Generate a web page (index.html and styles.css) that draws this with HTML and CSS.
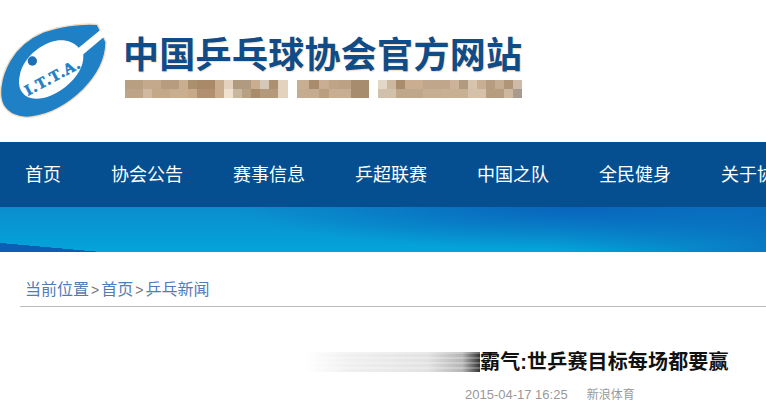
FILE: index.html
```html
<!DOCTYPE html>
<html lang="zh-CN">
<head>
    <meta charset="UTF-8">
    <title>中国乒乓球协会官方网站</title>
    <link rel="stylesheet" href="styles.css">
</head>
<body>
    <header class="header">
        <svg class="logo" width="110" height="102" viewBox="0 0 330 306">
            <path d="M30 130C55 88 90 62 130 45C175 28 240 18 292 22L318 75C318 125 292 175 250 218C205 262 150 292 95 300C55 305 25 290 10 265C-4 240 -2 185 30 130Z" fill="#1f80c6" stroke="#f3dcc0" stroke-width="4"/>
            <path d="M60 172C70 125 120 78 175 70C200 68 222 76 236 92L300 40L316 56L250 112C252 150 232 180 196 210C165 235 125 250 95 244C65 238 50 210 60 172Z" fill="#fff"/>
            <circle cx="97" cy="132" r="14" fill="#1f6fb5"/>
            <text class="logo-text" x="84" y="236" transform="rotate(-28 84 236)">I.T.T.A.</text>
        </svg>
        <div class="brand">
            <h1 class="brand-title">中国乒乓球协会官方网站</h1>
            <div class="brand-sub">
                <span class="mosaic mosaic-a"></span>
                <span class="mosaic mosaic-b"></span>
                <span class="mosaic mosaic-c"></span>
            </div>
        </div>
    </header>

    <nav class="nav">
        <a href="#">首页</a>
        <a href="#">协会公告</a>
        <a href="#">赛事信息</a>
        <a href="#">乒超联赛</a>
        <a href="#">中国之队</a>
        <a href="#">全民健身</a>
        <a href="#">关于协会</a>
    </nav>

    <div class="banner"></div>

    <div class="crumbs">
        <a href="#">当前位置</a><span class="sep">&gt;</span><a href="#">首页</a><span class="sep">&gt;</span><a href="#">乒乓新闻</a>
    </div>

    <main class="article">
        <div class="article-title">
            <span class="smear"></span>
            <h2>霸气:世乒赛目标每场都要赢</h2>
        </div>
        <div class="article-meta">
            <span class="meta-date">2015-04-17 16:25</span>
            <span>新浪体育</span>
        </div>
    </main>
</body>
</html>
```

FILE: styles.css
```css
* {
    box-sizing: border-box;
    margin: 0;
    padding: 0;
}

html, body {
    overflow: hidden;
}

body {
    width: 766px;
    height: 413px;
    font-family: "Liberation Sans", "Noto Sans CJK SC", sans-serif;
    background-color: #fff;
}

a {
    color: inherit;
    text-decoration: none;
}

.header {
    height: 142px;
    display: flex;
    align-items: flex-start;
    padding-top: 17px;
}

.logo {
    flex: none;
}

.logo-text {
    font-family: "Liberation Serif", serif;
    font-size: 46px;
    font-weight: bold;
    fill: #1f80c6;
    stroke: #1f80c6;
    stroke-width: 2px;
    letter-spacing: 4px;
}

.brand {
    margin-left: 13px;
    padding-top: 16px;
}

.brand-title {
    font-size: 36px;
    line-height: 46px;
    font-weight: bold;
    letter-spacing: 0.3px;
    white-space: nowrap;
    color: #0f4c88;
    text-shadow: 1px 1px 1px #f0dcc0;
}

.brand-sub {
    display: flex;
    gap: 9px;
    height: 18px;
    margin-top: 1px;
    margin-left: 2px;
}

.mosaic {
    display: block;
    height: 100%;
    background-repeat: no-repeat;
    background-size: 100% 50%;
    background-position: 0 0, 0 100%;
    filter: blur(0.5px);
}

.mosaic-a {
    width: 163px;
    background-image:
        linear-gradient(90deg, #b89f82 0 18px, #c4a98c 18px 36px, #b89c7f 36px 54px, #c9ae90 54px 63px, #ab9070 63px 72px, #a98a68 72px 90px, #c9ad8e 90px 99px, #e4d2bf 99px 108px, #b09a80 108px 126px, #c9ad8f 126px 135px, #d5c8b8 135px 144px, #ad9070 144px 153px, #e3d2bd 153px),
        linear-gradient(90deg, #bda489 0 18px, #d0b9a0 18px 27px, #c4a88a 27px 45px, #c9ae90 45px 63px, #c9aa88 63px 72px, #b09070 72px 90px, #c9ad8e 90px 99px, #efe0d0 99px 108px, #c9b8a0 108px 117px, #b8a084 117px 126px, #a98c6c 126px 135px, #b39a7a 135px 153px, #e3d2bd 153px);
}

.mosaic-b {
    width: 72px;
    background-image:
        linear-gradient(90deg, #c8ae92 0 12px, #a98c6c 12px 22px, #c8ae92 22px 32px, #bfa586 32px 42px, #bca184 42px 54px, #a88c6e 54px),
        linear-gradient(90deg, #c5ab8f 0 22px, #b99e80 22px 32px, #c8ae92 32px 54px, #a88c6e 54px);
}

.mosaic-c {
    width: 144px;
    background-image:
        linear-gradient(90deg, #e3d8c8 0 9px, #cdb79e 9px 18px, #a98c6c 18px 27px, #c9ae92 27px 45px, #c0a78b 45px 72px, #cdb398 72px 81px, #b09a80 81px 90px, #d8c3ac 90px 99px, #c8ae92 99px 108px, #b79d80 108px 117px, #c4ad92 117px 126px, #b09578 126px 135px, #cdbba8 135px),
        linear-gradient(90deg, #d0c0ac 0 18px, #bfa78c 18px 45px, #c6ae92 45px 63px, #c8b094 63px 90px, #d5c0aa 90px 108px, #b79d80 108px 126px, #cdb79e 126px 135px, #a89a8c 135px);
}

.nav {
    height: 65px;
    display: flex;
    align-items: center;
    gap: 50px;
    padding: 0 0 4px 25px;
    background-color: #054f90;
    color: #fff;
    font-size: 18px;
    white-space: nowrap;
}

.nav a {
    flex: none;
}

.banner {
    height: 45px;
    background:
        linear-gradient(to top right, #0a5fb4 50%, transparent 51%) no-repeat 0 100% / 100px 9px,
        radial-gradient(ellipse 330px 42px at 570px 0, rgba(8, 98, 186, 0.95), transparent),
        linear-gradient(90deg, transparent 72%, rgba(10, 104, 186, 0.7)),
        linear-gradient(180deg, #0b8ccd, #03a5da);
}

.crumbs {
    margin-left: 20px;
    height: 55px;
    padding: 27px 0 0 5px;
    font-size: 16px;
    line-height: 22px;
    color: #4f7cb8;
    border-bottom: 1px solid #bbb;
}

.sep {
    margin: 0 2px;
    color: #777;
    font-size: 14px;
}

.article-title {
    display: flex;
    align-items: center;
    height: 24px;
    margin-top: 43px;
    padding-left: 305px;
}

.article-title h2 {
    font-size: 20px;
    font-weight: bold;
    line-height: 24px;
    letter-spacing: 0.15px;
    color: #111;
    white-space: nowrap;
}

.smear {
    display: block;
    width: 175px;
    height: 20px;
    background:
        repeating-linear-gradient(180deg, rgba(255, 255, 255, 0.25) 0 2px, transparent 2px 5px),
        linear-gradient(90deg, transparent 0%, #f0f0f0 25%, #e2e2e2 70%, #b5b5b5 90%, #333 100%);
    filter: blur(0.6px);
}

.article-meta {
    display: flex;
    align-items: center;
    gap: 19px;
    margin-top: 13px;
    padding-left: 465px;
    font-size: 12px;
    line-height: 16px;
    color: #999;
}

.meta-date {
    font-size: 13px;
}
```
